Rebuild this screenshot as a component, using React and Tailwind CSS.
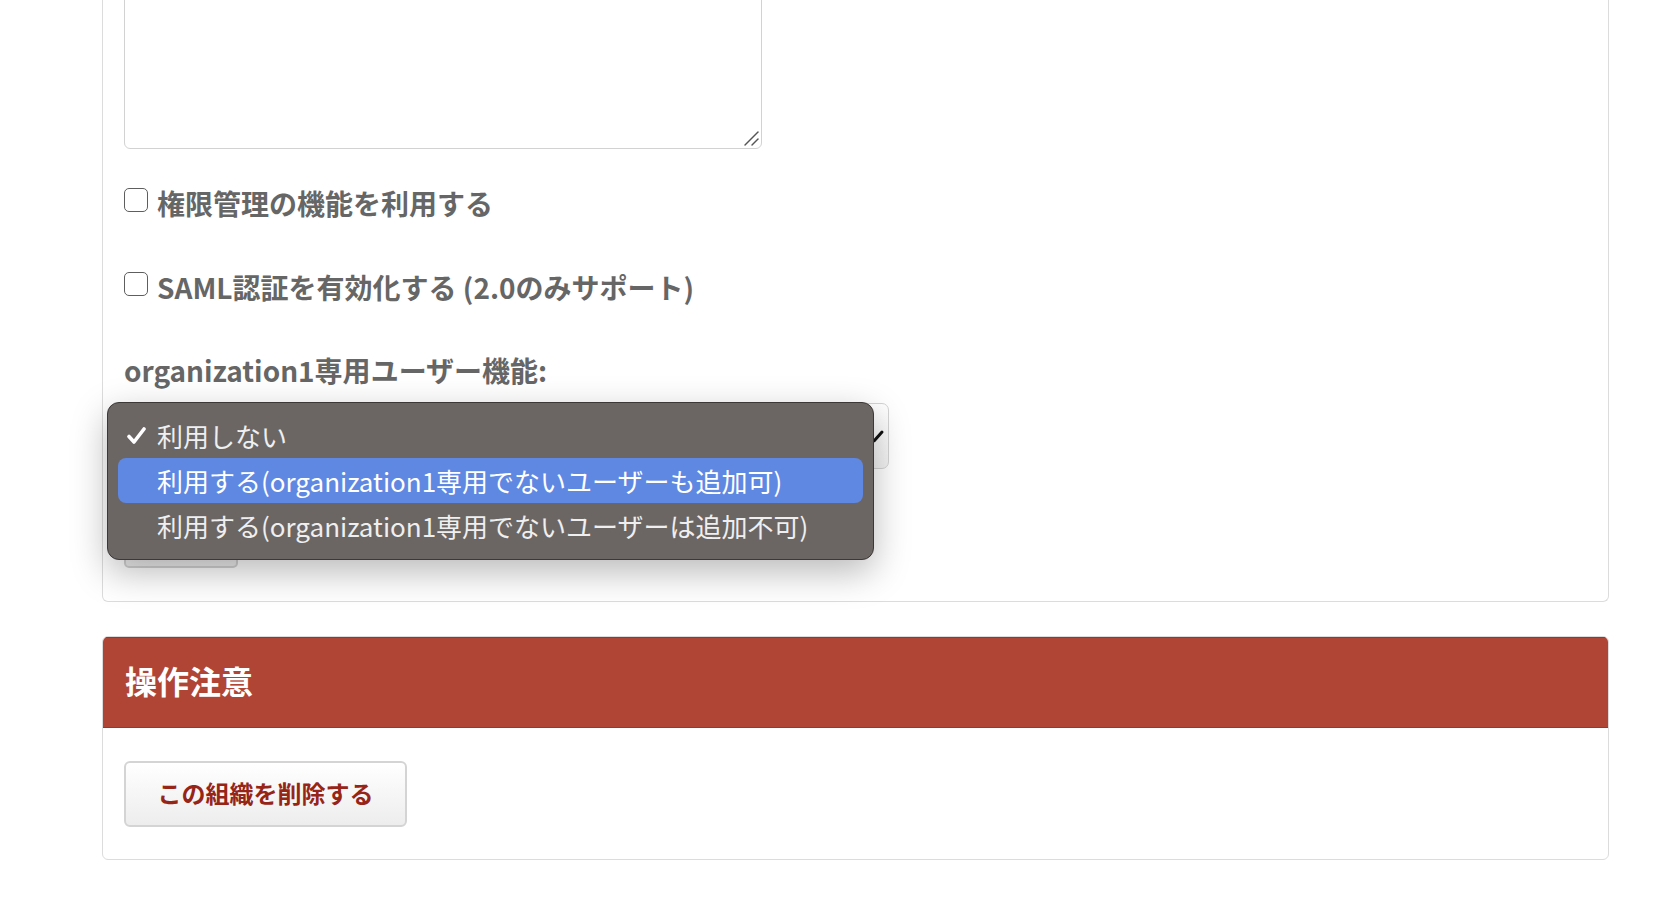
import React from "react";

const font = { fontFamily: '"Noto Sans CJK JP", "Noto Sans", sans-serif' };

function CheckRow({ label, className }) {
  return (
    <div className={"flex items-start " + className}>
      <div className="mt-[1px] h-[24px] w-[24px] shrink-0 rounded-[5px] border-[1.5px] border-[#5e5e5e] bg-white" />
      <span className="ml-[9px] text-[28px] font-bold leading-[32px] text-[#666666]">{label}</span>
    </div>
  );
}

function CheckIcon() {
  return (
    <svg width="19" height="17" viewBox="0 0 19 17" className="shrink-0">
      <path d="M2 9.5 L7 15 L17 2" fill="none" stroke="#ffffff" strokeWidth="3.6" strokeLinecap="round" strokeLinejoin="round" />
    </svg>
  );
}

export default function App() {
  return (
    <div className="relative h-[904px] w-full overflow-hidden bg-white" style={font}>
      <div className="ml-[102px] w-[1507px]">
        {/* top panel (upper part scrolled out of view) */}
        <div className="rounded-b-[6px] border-x border-b border-[#dcdcdc] px-[21px] pb-[33px]">
          <div className="relative -mt-[30px] w-[638px]">
            <textarea
              className="block h-[179px] w-[638px] resize-none rounded-[6px] border border-[#d2d2d2] bg-white outline-none"
              defaultValue=""
            />
            <svg width="16" height="16" viewBox="0 0 16 16" className="absolute bottom-[3px] right-[3px]">
              <path d="M2 15 L15 2" stroke="#555555" strokeWidth="1.4" strokeLinecap="round" />
              <path d="M9 15 L15 9" stroke="#555555" strokeWidth="1.4" strokeLinecap="round" />
            </svg>
          </div>
          <CheckRow className="mt-[38px]" label="権限管理の機能を利用する" />
          <CheckRow className="mt-[52px]" label="SAML認証を有効化する (2.0のみサポート)" />
          <div className="mt-[51px] text-[28px] font-bold leading-[32px] text-[#666666]">
            organization1専用ユーザー機能:
          </div>
          <div className="relative mt-[17px] h-[66px] w-[765px] rounded-[7px] border border-[#d4d4d4] bg-gradient-to-b from-white to-[#f3f3f3]">
            <svg width="24" height="16" viewBox="0 0 24 16" className="absolute left-[738px] top-[25px]">
              <path d="M3 3 L11 12 L19 3" fill="none" stroke="#111111" strokeWidth="3" strokeLinecap="round" strokeLinejoin="round" />
            </svg>
          </div>
          <div className="mt-[33px] h-[66px] w-[114px] rounded-[5px] border-2 border-[#d2d2d2] bg-gradient-to-b from-white to-[#ededed]" />
        </div>

        {/* danger panel */}
        <div className="mt-[34px] overflow-hidden rounded-[6px] border border-[#dcdcdc]">
          <div className="flex h-[91px] items-center border-y border-[#a23426] bg-[#b04535] px-[22px] pb-[6px]">
            <span className="text-[32px] font-bold leading-none text-white">操作注意</span>
          </div>
          <div className="px-[21px] pb-[32px] pt-[33px]">
            <button className="flex h-[66px] w-[283px] items-center justify-center rounded-[6px] border-2 border-[#d4d4d4] bg-gradient-to-b from-white to-[#ededed] pb-[3px] text-[24px] font-bold text-[#962518]">
              この組織を削除する
            </button>
          </div>
        </div>
      </div>

      {/* open select menu overlay */}
      <div className="absolute left-[107px] top-[402px] w-[767px] rounded-[12px] border border-[#3b3836] bg-[#6b6664] px-[10px] pb-[11px] pt-[10px] shadow-[0_12px_36px_rgba(0,0,0,0.28)]">
        <div className="flex h-[45px] items-center pl-[9px] text-[26px] leading-none text-[#efefef]">
          <CheckIcon />
          <span className="ml-[11px]">利用しない</span>
        </div>
        <div className="flex h-[45px] items-center rounded-[8px] bg-[#5f88e3] pl-[39px] text-[26px] leading-none text-white">
          利用する(organization1専用でないユーザーも追加可)
        </div>
        <div className="flex h-[45px] items-center pl-[39px] text-[26px] leading-none text-[#efefef]">
          利用する(organization1専用でないユーザーは追加不可)
        </div>
      </div>
    </div>
  );
}
